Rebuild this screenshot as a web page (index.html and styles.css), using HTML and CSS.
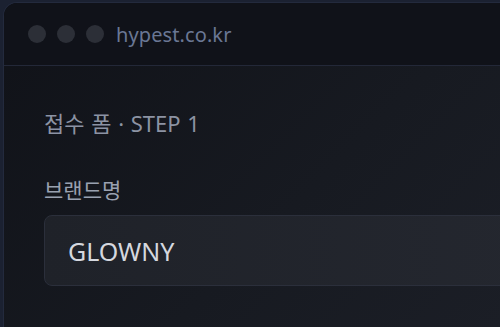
FILE: index.html
```html
<!DOCTYPE html>
<html lang="ko">
<head>
<meta charset="utf-8">
<link rel="stylesheet" href="styles.css">
</head>
<body>
<div class="window">
  <div class="titlebar">
    <span class="dot"></span><span class="dot"></span><span class="dot"></span>
    <span class="url">hypest.co.kr</span>
  </div>
  <div class="content">
    <div class="step">접수 폼 · STEP 1</div>
    <div class="label">브랜드명</div>
    <div class="input">GLOWNY</div>
  </div>
</div>
</body>
</html>
```

FILE: styles.css
```css
html, body {
  margin: 0;
  padding: 0;
  width: 500px;
  height: 327px;
  overflow: hidden;
  background: #1b2131;
}
body {
  padding: 2px 0 0 3px;
  box-sizing: border-box;
  font-family: "Noto Sans", "Noto Sans CJK KR", sans-serif;
}
.window {
  width: 497px;
  height: 325px;
  box-sizing: border-box;
  border-radius: 14px 0 0 0;
  border: 1px solid #232a3d;
  border-right: none;
  border-bottom: none;
  background: linear-gradient(135deg, #101218 0%, #171a21 60%, #1b1e26 100%);
  overflow: hidden;
}
.titlebar {
  height: 62px;
  display: flex;
  align-items: center;
  padding-left: 24px;
  gap: 11px;
  background: #101219;
  border-bottom: 1px solid #232838;
}
.dot {
  flex: none;
  width: 18px;
  height: 18px;
  border-radius: 50%;
  background: #2c2f37;
}
.url {
  margin-left: 1px;
  font-size: 20px;
  color: #6a7794;
  letter-spacing: 0.1px;
}
.content {
  padding: 42px 0 0 40px;
}
.step {
  font-size: 22px;
  color: #8c93a3;
  line-height: 30px;
  word-spacing: 1px;
}
.label {
  margin-top: 38px;
  font-size: 21px;
  color: #9aa1b0;
  line-height: 28px;
}
.input {
  margin-top: 11px;
  width: 500px;
  height: 71px;
  box-sizing: border-box;
  border: 1px solid #2b2f3b;
  border-radius: 8px;
  background: linear-gradient(90deg, #1f2229, #24272f);
  display: flex;
  align-items: center;
  padding-left: 23px;
  font-size: 25px;
  color: #d5d8df;
}
```
